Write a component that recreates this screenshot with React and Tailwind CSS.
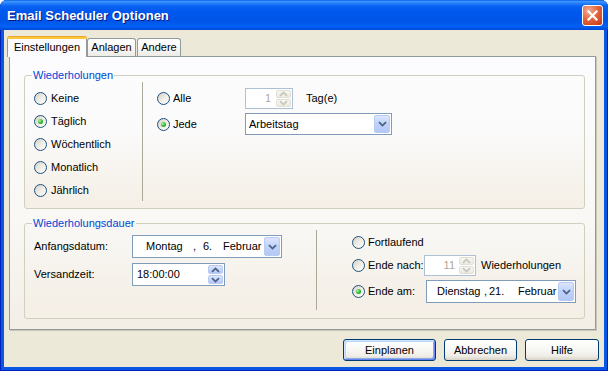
import React from 'react';

// kleine Pfeile für Spinner und Dropdowns
const Chevron = ({ dir = 'down', color = '#4D6185' }) => (
  <svg width="9" height="6" viewBox="0 0 9 6">
    <path
      d={dir === 'down' ? 'M1 1.2 L4.5 4.6 L8 1.2' : 'M1 4.8 L4.5 1.4 L8 4.8'}
      fill="none"
      stroke={color}
      strokeWidth="1.8"
    />
  </svg>
);

const Radio = ({ checked }) => (
  <span className="flex h-[13px] w-[13px] shrink-0 items-center justify-center rounded-full border border-[#1C5180] bg-[linear-gradient(135deg,#D3D0C3_0%,#EEEDE6_50%,#FFFFFF_100%)]">
    {checked && (
      <span className="h-[5px] w-[5px] rounded-full bg-[radial-gradient(circle_at_35%_35%,#B2F5A8_0%,#3BC03B_45%,#178A17_100%)]" />
    )}
  </span>
);

const RadioLabel = ({ checked, children, className = '' }) => (
  <div className={`flex items-center ${className}`}>
    <Radio checked={checked} />
    <span>{children}</span>
  </div>
);

const DropButton = () => (
  <div className="flex w-[16px] shrink-0 items-center justify-center rounded-[2px] border border-[#B9CBF3] bg-[linear-gradient(180deg,#DCE6FD_0%,#C1D3FB_45%,#B4C8F6_100%)]">
    <Chevron dir="down" />
  </div>
);

const SpinButtons = ({ disabled }) => (
  <div className="flex w-[15px] shrink-0 flex-col gap-px">
    <div
      className={`flex flex-1 items-center justify-center rounded-[2px] border ${
        disabled
          ? 'border-[#E2E0D6] bg-[linear-gradient(180deg,#F7F6F2,#ECEAE2)]'
          : 'border-[#B9CBF3] bg-[linear-gradient(180deg,#DCE6FD,#B4C8F6)]'
      }`}
    >
      <Chevron dir="up" color={disabled ? '#C9C7BA' : '#4D6185'} />
    </div>
    <div
      className={`flex flex-1 items-center justify-center rounded-[2px] border ${
        disabled
          ? 'border-[#E2E0D6] bg-[linear-gradient(180deg,#F7F6F2,#ECEAE2)]'
          : 'border-[#B9CBF3] bg-[linear-gradient(180deg,#DCE6FD,#B4C8F6)]'
      }`}
    >
      <Chevron dir="down" color={disabled ? '#C9C7BA' : '#4D6185'} />
    </div>
  </div>
);

const XpButton = ({ children, className = '' }) => (
  <button
    className={`flex h-[22px] items-center justify-center rounded-[3px] border border-[#003C74] bg-[linear-gradient(180deg,#FFFFFF_0%,#F8F8F5_45%,#EEEDE7_80%,#D8D2C6_100%)] ${className}`}
  >
    {children}
  </button>
);

export default function App() {
  return (
    <div className="h-[371px] w-[608px] bg-white font-['Liberation_Sans',Arial,sans-serif] text-[11px] leading-[13px] text-black">
      <div className="flex h-full flex-col rounded-t-[7px] bg-[#0A57E4] shadow-[inset_1px_0_0_#0020B8,inset_-1px_0_0_#0020B8,inset_0_-1px_0_#0020B8]">
        {/* Titelleiste */}
        <div className="flex h-[30px] shrink-0 items-center justify-between rounded-t-[7px] bg-[linear-gradient(180deg,#0A5DE5_0%,#3D95FF_5%,#2A84FB_10%,#0A62F2_20%,#0058EE_38%,#0055E8_70%,#0060F5_88%,#0047D8_100%)] pl-[7px] pr-[5px]">
          <span className="text-[13px] font-bold text-white [text-shadow:1px_1px_0_#0A1883]">
            Email Scheduler Optionen
          </span>
          <div className="flex h-[21px] w-[21px] items-center justify-center rounded-[3px] border border-white bg-[radial-gradient(circle_at_30%_25%,#F4AE93_0%,#E3673F_45%,#C5360E_100%)]">
            <svg width="11" height="11" viewBox="0 0 11 11">
              <path d="M1.5 1.5 L9.5 9.5 M9.5 1.5 L1.5 9.5" stroke="white" strokeWidth="2.2" strokeLinecap="square" />
            </svg>
          </div>
        </div>

        <div className="mx-[4px] mb-[4px] flex flex-1 flex-col bg-[#ECE9D8]">
          {/* Reiter */}
          <div className="flex h-[26px] shrink-0 items-end pl-[3px]">
            <div className="relative z-10 -mb-px flex h-[21px] w-[80px] flex-col rounded-t-[3px] border-x border-[#919B9C] bg-[#FCFCFE]">
              <div className="-mx-px h-[3px] rounded-t-[3px] bg-[linear-gradient(180deg,#E68B2C_0%,#FFC73C_45%,#FFC73C_100%)]" />
              <div className="flex flex-1 items-center justify-center pb-px">Einstellungen</div>
            </div>
            <div className="flex h-[18px] w-[49px] items-center justify-center rounded-t-[3px] border border-b-0 border-[#919B9C] bg-[linear-gradient(180deg,#FFFFFF_0%,#F7F6F2_60%,#ECEBE5_100%)]">
              Anlagen
            </div>
            <div className="ml-px flex h-[18px] w-[44px] items-center justify-center rounded-t-[3px] border border-b-0 border-[#919B9C] bg-[linear-gradient(180deg,#FFFFFF_0%,#F7F6F2_60%,#ECEBE5_100%)]">
              Andere
            </div>
          </div>

          {/* Reiterseite */}
          <div className="ml-[5px] flex h-[274px] w-[587px] flex-col border border-[#919B9C] bg-[linear-gradient(180deg,#FCFCFE_0%,#F9F8F5_60%,#F3EEE6_100%)] pl-[14px] pt-[12px] shadow-[1px_1px_0_#C9C7BA]">
            <fieldset className="h-[140px] w-[561px] rounded-[3px] border border-[#D0D0BF] bg-[linear-gradient(180deg,rgba(255,255,255,0)_45%,#F5EFE6_100%)]">
              <legend className="ml-[7px] px-px leading-[13px] text-[#0046D5]">Wiederholungen</legend>
              <div className="flex h-[126px]">
                <div className="flex w-[117px] flex-col pl-[9px] pt-[5px]">
                  <RadioLabel className="h-[23px] gap-[4px]">Keine</RadioLabel>
                  <RadioLabel checked className="h-[23px] gap-[4px]">Täglich</RadioLabel>
                  <RadioLabel className="h-[23px] gap-[4px]">Wöchentlich</RadioLabel>
                  <RadioLabel className="h-[23px] gap-[4px]">Monatlich</RadioLabel>
                  <RadioLabel className="h-[23px] gap-[4px]">Jährlich</RadioLabel>
                </div>
                <div className="mb-[7px] w-px bg-[#ACA899]" />
                <div className="flex flex-col gap-[4px] pl-[14px] pt-[6px]">
                  <div className="flex h-[21px] items-center">
                    <RadioLabel className="w-[88px] gap-[3px]">Alle</RadioLabel>
                    <div className="flex h-[21px] w-[48px] border border-[#AEC0D4] bg-white p-px">
                      <div className="flex flex-1 items-center justify-end pr-[5px] text-[#ACA899]">1</div>
                      <SpinButtons disabled />
                    </div>
                    <span className="ml-[13px]">Tag(e)</span>
                  </div>
                  <div className="flex h-[22px] items-center">
                    <RadioLabel checked className="w-[88px] gap-[3px]">Jede</RadioLabel>
                    <div className="flex h-[22px] w-[147px] border border-[#7F9DB9] bg-white p-px">
                      <div className="flex flex-1 items-center pl-[2px]">Arbeitstag</div>
                      <DropButton />
                    </div>
                  </div>
                </div>
              </div>
            </fieldset>

            <fieldset className="mt-[8px] h-[102px] w-[561px] rounded-[3px] border border-[#D0D0BF] bg-[linear-gradient(180deg,rgba(255,255,255,0)_35%,#F5EFE6_100%)]">
              <legend className="ml-[7px] px-px leading-[13px] text-[#0046D5]">Wiederholungsdauer</legend>
              <div className="flex h-[88px]">
                <div className="flex w-[291px] flex-col gap-[5px] pl-[9px] pt-[5px]">
                  <div className="flex h-[23px] items-center">
                    <span className="w-[98px]">Anfangsdatum:</span>
                    <div className="flex h-[23px] w-[150px] border border-[#7F9DB9] bg-white p-px">
                      <div className="flex flex-1 items-center overflow-hidden whitespace-nowrap pl-[12px]">
                        <span className="w-[47px] shrink-0">Montag</span>
                        <span className="w-[10px] shrink-0">,</span>
                        <span className="w-[20px] shrink-0">6.</span>
                        <span>Februar</span>
                      </div>
                      <DropButton />
                    </div>
                  </div>
                  <div className="flex h-[23px] items-center">
                    <span className="w-[98px]">Versandzeit:</span>
                    <div className="flex h-[23px] w-[93px] border border-[#7F9DB9] bg-white p-px">
                      <div className="flex flex-1 items-center pl-[3px]">18:00:00</div>
                      <SpinButtons />
                    </div>
                  </div>
                </div>
                <div className="mb-[8px] w-px bg-[#ACA899]" />
                <div className="flex flex-col pl-[35px] pt-[2px]">
                  <RadioLabel className="h-[20px] gap-[3px]">Fortlaufend</RadioLabel>
                  <div className="mt-[3px] flex h-[21px] items-center">
                    <RadioLabel className="w-[72px] gap-[3px]">Ende nach:</RadioLabel>
                    <div className="flex h-[21px] w-[52px] border border-[#AEC0D4] bg-white p-px">
                      <div className="flex flex-1 items-center justify-end pr-[4px] text-[#ACA899]">11</div>
                      <SpinButtons disabled />
                    </div>
                    <span className="ml-[5px]">Wiederholungen</span>
                  </div>
                  <div className="mt-[4px] flex h-[23px] items-center">
                    <RadioLabel checked className="w-[74px] gap-[3px]">Ende am:</RadioLabel>
                    <div className="flex h-[23px] w-[150px] border border-[#7F9DB9] bg-white p-px">
                      <div className="flex flex-1 items-center overflow-hidden whitespace-nowrap pl-[9px]">
                        <span className="w-[47px] shrink-0">Dienstag</span>
                        <span className="w-[5px] shrink-0">,</span>
                        <span className="w-[29px] shrink-0">21.</span>
                        <span>Februar</span>
                      </div>
                      <DropButton />
                    </div>
                  </div>
                </div>
              </div>
            </fieldset>
          </div>

          {/* Schaltflächen */}
          <div className="mt-[9px] flex justify-end gap-[8px] pr-[5px]">
            <XpButton className="w-[93px] shadow-[inset_1px_1px_0_#CEE7FF,inset_-1px_-1px_0_#6982EE,inset_2px_2px_0_#BCD4F6,inset_-2px_-2px_0_#89ADE4]">
              Einplanen
            </XpButton>
            <XpButton className="w-[73px]">Abbrechen</XpButton>
            <XpButton className="w-[74px]">Hilfe</XpButton>
          </div>
        </div>
      </div>
    </div>
  );
}
